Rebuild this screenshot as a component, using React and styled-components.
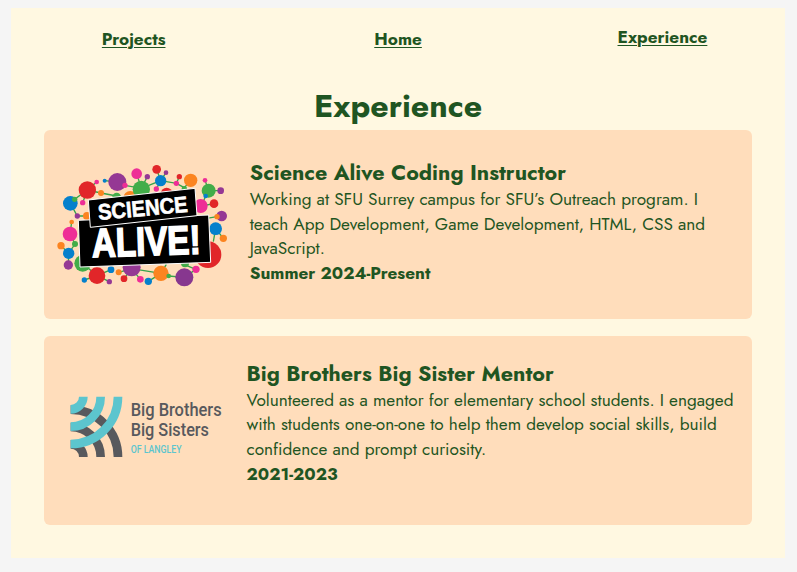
import React from "react";
import styled, { createGlobalStyle } from "styled-components";

const green = "#1f5522";

const GlobalStyle = createGlobalStyle`
  *, *::before, *::after { box-sizing: border-box; }
  body {
    margin: 0;
    background: #f5f5f5;
    color: ${green};
    font-family: Jost, Lato, sans-serif;
  }
  h1, h2, p { margin: 0; }
`;

const Page = styled.div`
  width: 773.5px;
  height: 550px;
  margin: 7.5px 0 0 11.3px;
  background: #fff8e1;
`;

const Nav = styled.nav`
  display: grid;
  grid-template-columns: repeat(3, 264.4px);
  justify-content: center;
  justify-items: center;
  height: 82px;
  padding-top: 19.4px;
`;

const NavLink = styled.a`
  height: 24px;
  margin-top: ${(p) => (p.$raised ? "-2.4px" : "0")};
  font-size: 17.2px;
  font-weight: 700;
  line-height: 24px;
  color: ${green};
  text-decoration: underline;
  text-decoration-thickness: 1px;
  text-underline-offset: 2px;
`;

const Heading = styled.h1`
  height: 40.5px;
  font-size: 32.2px;
  font-weight: 700;
  line-height: 33px;
  text-align: center;
`;

const Cards = styled.main`
  display: flex;
  flex-direction: column;
  gap: 16.5px;
  width: 708px;
  margin-left: 32.4px;
`;

const Card = styled.article`
  display: flex;
  height: 189.3px;
  border-radius: 6px;
  background: #ffddbb;
`;

const LogoSlot = styled.div`
  display: flex;
  flex: none;
  width: ${(p) => p.$width}px;
  padding: ${(p) => p.$inset};
`;

const Details = styled.div`
  padding-top: ${(p) => p.$top}px;
  white-space: nowrap;
`;

const Title = styled.h2`
  font-size: 21.5px;
  font-weight: 700;
  line-height: 27.6px;
`;

const Line = styled.span`
  display: block;
  font-size: 17.2px;
  line-height: 24.8px;
`;

const Dates = styled.p`
  font-size: 17.2px;
  font-weight: 700;
  line-height: 24px;
`;

const Svg = styled.svg`
  display: block;
  flex: none;
  overflow: visible;
`;

const RED = "#e12629";
const BLUE = "#0580cc";
const ORANGE = "#fb8420";
const PURPLE = "#953894";
const PINK = "#ee2e96";
const LEAF = "#42ad49";

const links = [
  "M91 145L104 133L142 105L183 114L230 123",
  "M142 105L170 81M142 105L128 143",
  "M91 145L112 183H140",
  "M194 77L232 81L255 91L304 100L322 65M290 56L304 100L362 77L350 43M362 77L378 53M362 77L349 102M362 77L409 85L418 65M409 85L433 98L452 76",
  "M495 76L506 107L542 107M506 107L497 123L484 153L522 146",
  "M545 183L531 185L500 190M520 260L527 221L550 250",
  "M95 201L90 237L105 267L86 295L63 272M86 295L85 330",
  "M128 325L171 362L213 344M171 362L133 375M171 362L208 380",
  "M236 352L275 341L252 371M275 341L301 373M275 341L363 355L386 363L433 367L468 343L433 329M363 355L325 379M363 355L379 328",
];

const dots = [
  [91, 145, 22, BLUE], [104, 133, 8, LEAF], [142, 105, 26, RED], [170, 81, 7, PINK],
  [183, 114, 9, ORANGE], [128, 143, 8, PINK], [112, 183, 8, PURPLE], [141, 183, 12, ORANGE],
  [194, 77, 6, BLUE], [232, 81, 27, PURPLE], [255, 91, 8, PINK], [230, 126, 13, LEAF],
  [271, 129, 21, ORANGE], [304, 103, 26, LEAF], [290, 56, 16, PINK], [322, 65, 8, PURPLE],
  [350, 43, 13, RED], [378, 53, 7, PURPLE], [362, 77, 17, BLUE], [349, 102, 8, PINK],
  [380, 116, 18, RED], [409, 85, 8, PINK], [418, 65, 8, RED], [433, 101, 8, LEAF],
  [452, 76, 20, ORANGE], [495, 76, 7, PINK], [506, 107, 21, LEAF], [542, 107, 10, PURPLE],
  [482, 153, 21, PINK], [497, 123, 7, BLUE], [522, 146, 13, RED], [545, 183, 16, PURPLE],
  [531, 185, 8, ORANGE], [504, 299, 40, RED], [527, 221, 19, BLUE], [550, 250, 11, ORANGE],
  [95, 201, 7, ORANGE], [90, 237, 22, PINK], [105, 267, 9, LEAF], [86, 295, 17, BLUE],
  [63, 272, 11, ORANGE], [85, 330, 14, PURPLE], [128, 325, 25, LEAF], [171, 362, 25, RED],
  [213, 344, 10, BLUE], [133, 375, 8, BLUE], [208, 380, 8, PURPLE], [236, 352, 9, ORANGE],
  [252, 371, 10, RED], [275, 337, 27, PURPLE], [301, 373, 10, PINK], [325, 379, 11, BLUE],
  [363, 355, 23, ORANGE], [386, 363, 7, LEAF], [433, 367, 27, "#87378f"], [468, 343, 11, PINK],
  [435, 325, 12, LEAF],
];

function ScienceAliveLogo() {
  return (
    <Svg width="176" height="126" viewBox="45 24 528 378" role="img" aria-label="Science Alive">
      {links.map((d) => (
        <path key={d} d={d} fill="none" stroke="#36a34a" strokeWidth="4" />
      ))}
      {dots.map(([x, y, r, fill]) => (
        <circle key={`${x}-${y}`} cx={x} cy={y} r={r} fill={fill} />
      ))}
      <path d="M115 196L506 180L512 322L120 336Z" fill="#000" stroke="#fff" strokeWidth="3" />
      <path d="M145 135L465 100L471 182L151 217Z" fill="#000" stroke="#fff" strokeWidth="3" />
      <g fill="#fff" stroke="#fff" fontFamily="'Liberation Sans', sans-serif" fontWeight="700">
        <text
          transform="translate(176 195) rotate(-5.3)"
          fontSize="67"
          strokeWidth="2"
          textLength="270"
          lengthAdjust="spacingAndGlyphs"
        >
          SCIENCE
        </text>
        <text
          transform="translate(157 307) rotate(-2)"
          fontSize="122"
          strokeWidth="5"
          textLength="326"
          lengthAdjust="spacingAndGlyphs"
        >
          ALIVE!
        </text>
      </g>
    </Svg>
  );
}

function BigBrothersLogo() {
  return (
    <Svg width="152.67" height="62" viewBox="30 35 458 186" role="img" aria-label="Big Brothers Big Sisters of Langley">
      <g fill="none" strokeWidth="26">
        <path
          stroke="#58595d"
          d="M32 180A38 38 0 0 1 70 218M32 128A90 90 0 0 1 122 218M32 76A142 142 0 0 1 174 218"
        />
        <path
          stroke="#5cc5ce"
          d="M70 37A38 38 0 0 1 32 75M122 37A90 90 0 0 1 32 127M174 37A142 142 0 0 1 32 179"
        />
      </g>
      <g fontFamily="Roboto, sans-serif" fill="#58595d" fontWeight="500">
        <text x="212" y="95" fontSize="57" textLength="273" lengthAdjust="spacingAndGlyphs">
          Big Brothers
        </text>
        <text x="212" y="156" fontSize="57" textLength="235" lengthAdjust="spacingAndGlyphs">
          Big Sisters
        </text>
        <text x="212" y="205" fontSize="32" fill="#5cc5ce" textLength="153" lengthAdjust="spacingAndGlyphs">
          OF LANGLEY
        </text>
      </g>
    </Svg>
  );
}

const jobs = [
  {
    Logo: ScienceAliveLogo,
    slot: 206,
    inset: "33.2px 0 0 11.3px",
    top: 29.2,
    title: "Science Alive Coding Instructor",
    lines: [
      "Working at SFU Surrey campus for SFU’s Outreach program. I",
      "teach App Development, Game Development, HTML, CSS and",
      "JavaScript.",
    ],
    dates: "Summer 2024-Present",
  },
  {
    Logo: BigBrothersLogo,
    slot: 202.8,
    inset: "60.7px 0 0 26.3px",
    top: 24.3,
    title: "Big Brothers Big Sister Mentor",
    lines: [
      "Volunteered as a mentor for elementary school students. I engaged",
      "with students one-on-one to help them develop social skills, build",
      "confidence and prompt curiosity.",
    ],
    dates: "2021-2023",
  },
];

export default function App() {
  return (
    <>
      <GlobalStyle />
      <Page>
        <Nav>
          <NavLink href="#projects">Projects</NavLink>
          <NavLink href="#home">Home</NavLink>
          <NavLink href="#experience" $raised>Experience</NavLink>
        </Nav>
        <Heading>Experience</Heading>
        <Cards>
          {jobs.map(({ Logo, slot, inset, top, title, lines, dates }) => (
            <Card key={title}>
              <LogoSlot $width={slot} $inset={inset}>
                <Logo />
              </LogoSlot>
              <Details $top={top}>
                <Title>{title}</Title>
                <p>
                  {lines.map((text) => (
                    <Line key={text}>{text}</Line>
                  ))}
                </p>
                <Dates>{dates}</Dates>
              </Details>
            </Card>
          ))}
        </Cards>
      </Page>
    </>
  );
}
